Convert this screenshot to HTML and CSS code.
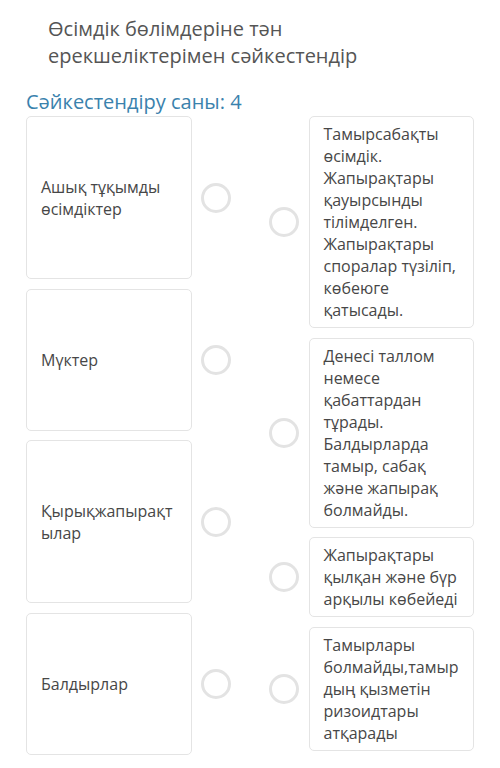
FILE: index.html
```html
<!DOCTYPE html>
<html lang="kk">
<head>
    <meta charset="UTF-8">
    <meta name="viewport" content="width=device-width, initial-scale=1.0">
    <title>Сәйкестендір</title>
    <link rel="stylesheet" href="styles.css">
</head>
<body>
    <div class="page">
        <h1 class="title">Өсімдік бөлімдеріне тән ерекшеліктерімен сәйкестендір</h1>
        <h2 class="count">Сәйкестендіру саны: 4</h2>
        <div class="match">
            <div class="column">
                <div class="row">
                    <div class="card term tall">Ашық тұқымды өсімдіктер</div>
                    <span class="radio"></span>
                </div>
                <div class="row">
                    <div class="card term">Мүктер</div>
                    <span class="radio"></span>
                </div>
                <div class="row">
                    <div class="card term tall">Қырықжапырақтылар</div>
                    <span class="radio"></span>
                </div>
                <div class="row">
                    <div class="card term">Балдырлар</div>
                    <span class="radio"></span>
                </div>
            </div>
            <div class="column">
                <div class="row">
                    <span class="radio"></span>
                    <div class="card">Тамырсабақты өсімдік. Жапырақтары қауырсынды тілімделген. Жапырақтары споралар түзіліп, көбеюге қатысады.</div>
                </div>
                <div class="row">
                    <span class="radio"></span>
                    <div class="card">Денесі таллом немесе қабаттардан тұрады. Балдырларда тамыр, сабақ және жапырақ болмайды.</div>
                </div>
                <div class="row">
                    <span class="radio"></span>
                    <div class="card">Жапырақтары қылқан және бүр арқылы көбейеді</div>
                </div>
                <div class="row">
                    <span class="radio"></span>
                    <div class="card">Тамырлары болмайды,тамырдың қызметін ризоидтары атқарады</div>
                </div>
            </div>
        </div>
    </div>
</body>
</html>
```
FILE: styles.css
```css
body {
    margin: 0;
    background: #fff;
    font-family: "Open Sans", "Noto Sans", sans-serif;
    color: #555;
}
.page {
    padding: 15px 26px 0;
}
.title {
    margin: 0 0 0 22px;
    max-width: 380px;
    font-size: 20px;
    line-height: 27px;
    font-weight: normal;
    color: #555;
}
.count {
    margin: 19px 0 1px;
    font-size: 20px;
    line-height: 27px;
    font-weight: normal;
    color: #3a82ad;
}
.match {
    display: grid;
    grid-template-columns: 205px 205px;
    column-gap: 38px;
    align-items: start;
}
.column {
    display: flex;
    flex-direction: column;
    gap: 9.5px;
}
.row {
    display: flex;
    align-items: center;
    gap: 9.5px;
}
.card {
    flex: 1;
    min-width: 0;
    box-sizing: border-box;
    padding: 6px 10px 6px 14px;
    border: 1px solid #e4e4e4;
    border-radius: 5px;
    background: #fff;
    font-size: 16px;
    line-height: 22px;
    color: #474747;
    overflow-wrap: anywhere;
}
.term {
    display: flex;
    align-items: center;
    height: 142px;
}
.term.tall {
    height: 163px;
}
.radio {
    flex: none;
    box-sizing: border-box;
    width: 30px;
    height: 30px;
    border: 3px solid #e3e3e3;
    border-radius: 50%;
    background: #fff;
}
```
